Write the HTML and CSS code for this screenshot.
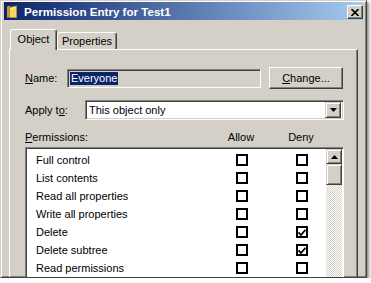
FILE: index.html
```html
<!DOCTYPE html>
<html lang="en">
<head>
  <meta charset="UTF-8">
  <meta name="viewport" content="width=device-width, initial-scale=1.0">
  <link rel="stylesheet" href="styles.css">
</head>
<body>
  <div class="window">
    <div class="titlebar">
      <svg class="folder-icon" width="11" height="13" viewBox="0 0 11 13">
        <path d="M1 1.5 L4 0.5 L4 12.5 L1 12.5 Z" fill="#c99a2e"/>
        <path d="M3.5 2.5 L10.5 1 L10.5 12.5 L3.5 12.5 Z" fill="#f4d46a" stroke="#b8892a" stroke-width="1"/>
        <path d="M4.5 3.5 L9.5 2.5" stroke="#fff3b8" stroke-width="1"/>
      </svg>
      <span class="title">Permission Entry for Test1</span>
      <div class="close-btn">
        <svg width="8" height="7" viewBox="0 0 8 7">
          <path d="M0.5 0 L7.5 7 M7.5 0 L0.5 7" stroke="#000" stroke-width="1.6"/>
        </svg>
      </div>
    </div>

    <div class="tabs">
      <div class="tab active">Object</div>
      <div class="tab">Properties</div>
    </div>

    <div class="panel">
      <div class="name-row">
        <span class="label name-label"><u>N</u>ame:</span>
        <div class="name-box"><span class="selected">Everyone</span></div>
        <div class="btn"><span><u>C</u>hange...</span></div>
      </div>

      <div class="apply-row">
        <span class="label apply-label">Apply t<u>o</u>:</span>
        <div class="combo">
          <span class="combo-text">This object only</span>
          <div class="combo-btn">
            <svg width="7" height="4" viewBox="0 0 7 4"><path d="M0 0 H7 L3.5 4 Z" fill="#000"/></svg>
          </div>
        </div>
      </div>

      <div class="perm-head">
        <span><u>P</u>ermissions:</span>
        <span class="col">Allow</span>
        <span class="col">Deny</span>
      </div>

      <div class="listbox">
        <div class="items">
          <div class="item"><span>Full control</span><span class="col"><i class="check"></i></span><span class="col"><i class="check"></i></span></div>
          <div class="item"><span>List contents</span><span class="col"><i class="check"></i></span><span class="col"><i class="check"></i></span></div>
          <div class="item"><span>Read all properties</span><span class="col"><i class="check"></i></span><span class="col"><i class="check"></i></span></div>
          <div class="item"><span>Write all properties</span><span class="col"><i class="check"></i></span><span class="col"><i class="check"></i></span></div>
          <div class="item"><span>Delete</span><span class="col"><i class="check"></i></span><span class="col"><i class="check checked"><svg width="8" height="7" viewBox="0 0 8 7"><path d="M0.5 3.5 L3 6 L7.5 0.8" fill="none" stroke="#000" stroke-width="1.8"/></svg></i></span></div>
          <div class="item"><span>Delete subtree</span><span class="col"><i class="check"></i></span><span class="col"><i class="check checked"><svg width="8" height="7" viewBox="0 0 8 7"><path d="M0.5 3.5 L3 6 L7.5 0.8" fill="none" stroke="#000" stroke-width="1.8"/></svg></i></span></div>
          <div class="item"><span>Read permissions</span><span class="col"><i class="check"></i></span><span class="col"><i class="check"></i></span></div>
        </div>
        <div class="scrollbar">
          <div class="sb-btn">
            <svg width="7" height="4" viewBox="0 0 7 4"><path d="M0 4 H7 L3.5 0 Z" fill="#000"/></svg>
          </div>
          <div class="sb-thumb"></div>
          <div class="sb-track"></div>
        </div>
      </div>
    </div>
  </div>
</body>
</html>
```

FILE: styles.css
```css
body {
  margin: 0;
  background: #ffffff;
  font-family: 'Liberation Sans', Arial, sans-serif;
  font-size: 11px;
  color: #000;
}

.window {
  box-sizing: border-box;
  width: 367px;
  height: 278px;
  padding: 1px 3px 0 3px;
  background: #d4d0c8;
  border: 1px solid;
  border-color: #d4d0c8 #404040 #404040 #d4d0c8;
  box-shadow: inset 1px 1px #fff, inset -1px -1px #808080, 2px 2px 3px rgba(0, 0, 0, 0.45);
  overflow: hidden;
  display: flex;
  flex-direction: column;
}

.titlebar {
  height: 18px;
  flex-shrink: 0;
  display: flex;
  align-items: center;
  padding-left: 2px;
  background: linear-gradient(to right, #0a246a, #a6caf0);
}

.folder-icon {
  flex-shrink: 0;
}

.title {
  margin-left: 7px;
  color: #fff;
  font-weight: bold;
  font-size: 11.6px;
  flex: 1;
}

.close-btn {
  box-sizing: border-box;
  width: 16px;
  height: 14px;
  margin-top: 2px;
  display: flex;
  align-items: center;
  justify-content: center;
  background: #d4d0c8;
  border: 1px solid;
  border-color: #fff #404040 #404040 #fff;
  box-shadow: inset -1px -1px #808080;
}

.tabs {
  display: flex;
  align-items: flex-end;
  height: 20px;
  margin: 9px 5px 0 6px;
  position: relative;
  z-index: 1;
}

.tab {
  box-sizing: border-box;
  height: 17px;
  width: 60px;
  padding-top: 2px;
  text-align: center;
  line-height: 13px;
  border: 1px solid;
  border-bottom: none;
  border-color: #fff #404040 #404040 #fff;
  box-shadow: inset -1px 0 #808080;
  border-radius: 3px 3px 0 0;
  background: #d4d0c8;
}

.tab.active {
  width: 47px;
  height: 21px;
  margin-bottom: -1px;
  padding-top: 3px;
}

.panel {
  flex: 1;
  margin: 0 5px;
  padding: 17px 13px 0 15px;
  border: 1px solid;
  border-bottom: none;
  border-color: #fff #404040 #404040 #fff;
  box-shadow: inset -1px 0 #808080;
}

.name-row {
  display: flex;
  align-items: center;
  height: 22px;
}

.label {
  flex-shrink: 0;
}

.name-label {
  width: 42px;
}

.name-box {
  box-sizing: border-box;
  width: 194px;
  height: 19px;
  padding: 2px 0 0 2px;
  border: 1px solid;
  border-color: #808080 #fff #fff #808080;
  box-shadow: inset 1px 1px #404040, inset -1px -1px #d4d0c8;
  margin-right: 8px;
}

.selected {
  display: inline-block;
  background: #0a246a;
  color: #fff;
  padding: 0 1px;
  line-height: 13px;
}

.btn {
  box-sizing: border-box;
  width: 74px;
  height: 22px;
  display: flex;
  align-items: center;
  justify-content: center;
  border: 1px solid;
  border-color: #fff #404040 #404040 #fff;
  box-shadow: inset -1px -1px #808080;
}

.apply-row {
  display: flex;
  align-items: center;
  margin-top: 11px;
  height: 20px;
}

.apply-label {
  width: 60px;
}

.combo {
  box-sizing: border-box;
  flex: 1;
  height: 20px;
  display: flex;
  align-items: center;
  background: #fff;
  border: 1px solid;
  border-color: #808080 #fff #fff #808080;
  box-shadow: inset 1px 1px #404040, inset -1px -1px #d4d0c8;
  padding: 0 2px 0 3px;
}

.combo-text {
  flex: 1;
}

.combo-btn {
  box-sizing: border-box;
  width: 16px;
  height: 16px;
  display: flex;
  align-items: center;
  justify-content: center;
  background: #d4d0c8;
  border: 1px solid;
  border-color: #d4d0c8 #404040 #404040 #d4d0c8;
  box-shadow: inset 1px 1px #fff, inset -1px -1px #808080;
}

.perm-head {
  display: grid;
  grid-template-columns: 1fr 40px 40px;
  column-gap: 20px;
  margin-top: 11px;
  padding-right: 23px;
  height: 16px;
  line-height: 13px;
}

.perm-head .col {
  text-align: center;
}

.listbox {
  box-sizing: border-box;
  height: 140px;
  display: flex;
  background: #fff;
  border: 1px solid;
  border-color: #808080 #fff #fff #808080;
  box-shadow: inset 1px 1px #404040;
  padding: 1px 1px 0 1px;
}

.items {
  flex: 1;
  padding-top: 2px;
}

.item {
  display: grid;
  grid-template-columns: 1fr 40px 40px;
  column-gap: 20px;
  align-items: center;
  height: 18px;
  padding: 0 4px 0 9px;
}

.item .col {
  display: flex;
  justify-content: center;
}

.check {
  box-sizing: border-box;
  width: 12px;
  height: 12px;
  border: 2px solid #000;
  background: #fff;
  display: flex;
  align-items: center;
  justify-content: center;
}

.scrollbar {
  width: 16px;
  display: flex;
  flex-direction: column;
}

.sb-btn,
.sb-thumb {
  box-sizing: border-box;
  background: #d4d0c8;
  border: 1px solid;
  border-color: #d4d0c8 #404040 #404040 #d4d0c8;
  box-shadow: inset 1px 1px #fff, inset -1px -1px #808080;
}

.sb-btn {
  height: 15px;
  display: flex;
  align-items: center;
  justify-content: center;
}

.sb-thumb {
  height: 21px;
}

.sb-track {
  flex: 1;
  background: repeating-conic-gradient(#d4d0c8 0 25%, #fff 0 50%) 0 0 / 2px 2px;
}
```
